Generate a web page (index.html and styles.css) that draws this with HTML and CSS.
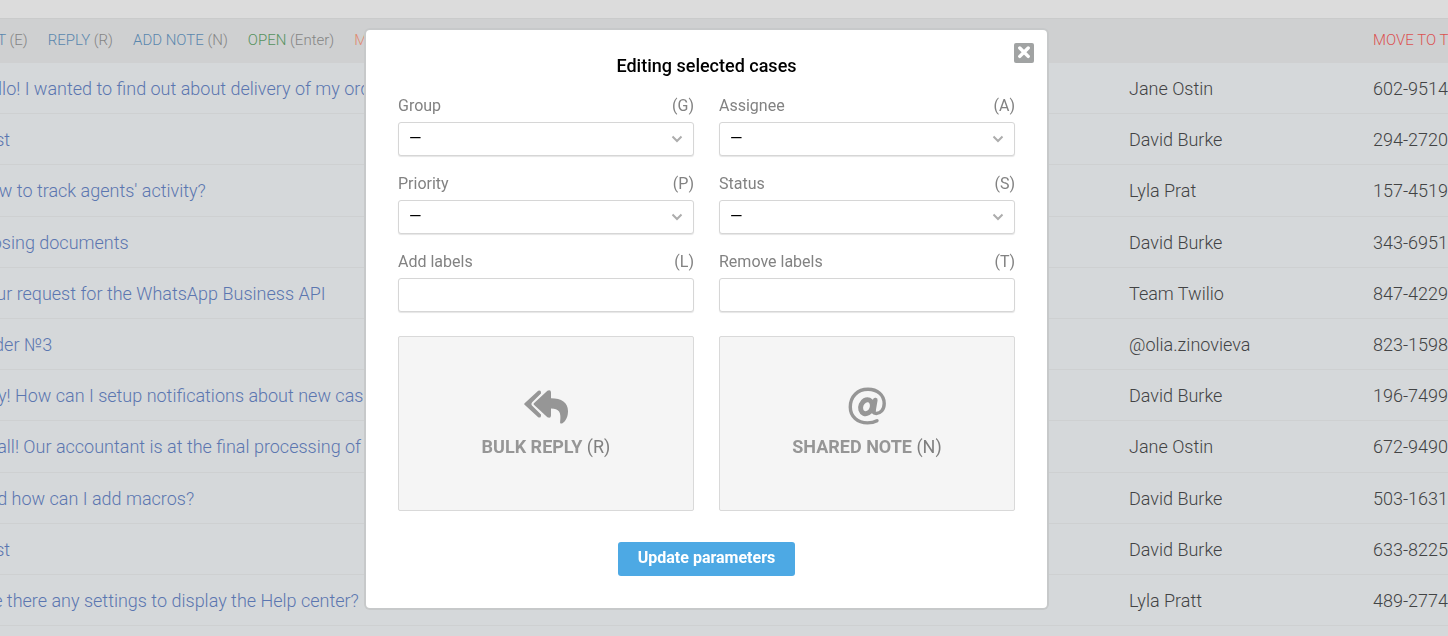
FILE: index.html
```html
<!DOCTYPE html>
<html lang="en">
<head>
<meta charset="utf-8">
<title>Editing selected cases</title>
<link rel="stylesheet" href="styles.css">
</head>
<body>
<main class="page">
  <div class="topbar"></div>
  <nav class="toolbar">
    <button class="action">EDIT <span class="key">(E)</span></button>
    <button class="action">REPLY <span class="key">(R)</span></button>
    <button class="action">ADD NOTE <span class="key">(N)</span></button>
    <button class="action action-open">OPEN <span class="key">(Enter)</span></button>
    <button class="action action-merge">MERGE</button>
    <button class="action action-trash">MOVE TO TRASH</button>
  </nav>
  <table class="cases">
    <colgroup><col class="col-subject"><col class="col-client"><col class="col-assignee"><col class="col-number"></colgroup>
    <tbody>
      <tr><td><a href="#">Hello! I wanted to find out about delivery of my order</a></td><td></td><td>Jane Ostin</td><td>602-951473</td></tr>
      <tr><td><a href="#">Test</a></td><td></td><td>David Burke</td><td>294-272083</td></tr>
      <tr><td><a href="#">How to track agents' activity?</a></td><td></td><td>Lyla Prat</td><td>157-451906</td></tr>
      <tr><td><a href="#">Closing documents</a></td><td></td><td>David Burke</td><td>343-695132</td></tr>
      <tr><td><a href="#">Your request for the WhatsApp Business API</a></td><td></td><td>Team Twilio</td><td>847-422915</td></tr>
      <tr><td><a href="#">Order №3</a></td><td></td><td>@olia.zinovieva</td><td>823-159834</td></tr>
      <tr><td><a href="#">Hey! How can I setup notifications about new cases?</a></td><td></td><td>David Burke</td><td>196-749940</td></tr>
      <tr><td><a href="#">Hi all! Our accountant is at the final processing of the</a></td><td></td><td>Jane Ostin</td><td>672-949027</td></tr>
      <tr><td><a href="#">And how can I add macros?</a></td><td></td><td>David Burke</td><td>503-163118</td></tr>
      <tr><td><a href="#">Test</a></td><td></td><td>David Burke</td><td>633-822554</td></tr>
      <tr><td><a href="#">Are there any settings to display the Help center?</a></td><td>,</td><td>Lyla Pratt</td><td>489-277461</td></tr>
    </tbody>
  </table>
</main>

<div class="overlay">
  <form class="modal" role="dialog" aria-labelledby="modal-title">
    <button class="close" type="button" aria-label="Close">
      <svg viewBox="0 0 20 20" width="20" height="20"><path d="M5.8 5 14.2 13.4M14.2 5 5.8 13.4" stroke="#fff" stroke-width="3.4" stroke-linecap="round"/></svg>
    </button>
    <h1 class="title" id="modal-title">Editing selected cases</h1>
    <div class="fields">
      <div class="field">
        <label class="label" for="group"><span>Group</span><span>(G)</span></label>
        <div class="select-wrap"><select class="control" id="group"><option>—</option></select><svg class="chevron" viewBox="0 0 12 8" width="12" height="8"><path d="M1.5 1.5 6 6 10.5 1.5"/></svg></div>
      </div>
      <div class="field">
        <label class="label" for="assignee"><span>Assignee</span><span>(A)</span></label>
        <div class="select-wrap"><select class="control" id="assignee"><option>—</option></select><svg class="chevron" viewBox="0 0 12 8" width="12" height="8"><path d="M1.5 1.5 6 6 10.5 1.5"/></svg></div>
      </div>
      <div class="field">
        <label class="label" for="priority"><span>Priority</span><span>(P)</span></label>
        <div class="select-wrap"><select class="control" id="priority"><option>—</option></select><svg class="chevron" viewBox="0 0 12 8" width="12" height="8"><path d="M1.5 1.5 6 6 10.5 1.5"/></svg></div>
      </div>
      <div class="field">
        <label class="label" for="status"><span>Status</span><span>(S)</span></label>
        <div class="select-wrap"><select class="control" id="status"><option>—</option></select><svg class="chevron" viewBox="0 0 12 8" width="12" height="8"><path d="M1.5 1.5 6 6 10.5 1.5"/></svg></div>
      </div>
      <div class="field">
        <label class="label" for="add-labels"><span>Add labels</span><span>(L)</span></label>
        <input class="control" id="add-labels" type="text">
      </div>
      <div class="field">
        <label class="label" for="remove-labels"><span>Remove labels</span><span>(T)</span></label>
        <input class="control" id="remove-labels" type="text">
      </div>
    </div>
    <div class="tiles">
      <button class="tile" type="button">
        <svg class="tile-icon" viewBox="0 0 44 40" width="44" height="40">
          <path d="M.6 17.2 14.2 4.7Q17 3.6 17 6.6V7.6L8.2 16.2Q6.6 18 8.2 19.8L17 28.4V29.4Q17 32.4 14.2 31.3L.6 18.8Q-.2 18 .6 17.2Z"/>
          <path d="M9.9 17.2 23.4 4.7Q27 3.4 27 6.6V12.3C37.5 12.3 44 16.5 44 25 44 30.5 42 35 38.5 37.2 37 38 35.9 37.4 36.1 36 37.5 26 35 22.5 27 22.5V29.4Q27 32.6 23.4 31.3L9.9 18.8Q9.1 18 9.9 17.2Z"/>
        </svg>
        <span class="tile-text"><b>BULK REPLY</b> (R)</span>
      </button>
      <button class="tile" type="button">
        <svg class="tile-icon" viewBox="0 0 40 40" width="40" height="40">
          <g fill="none" stroke="#969696" stroke-linecap="round">
            <path d="M30 34.7C27 36.4 24.5 36.9 20.5 36.9 10.5 36.9 3.3 30.5 3.3 21 3.3 10.5 10.5 3.3 21 3.3 30.5 3.3 37.2 9.3 37.2 17.5 37.2 23.8 33.5 27.8 28.5 27.4 26.5 27.2 26.7 26 27 24.5" stroke-width="3.4"/>
            <ellipse cx="19.5" cy="20.7" rx="5.7" ry="7.2" transform="rotate(22 19.5 20.7)" stroke-width="5"/>
            <path d="M28.3 14 26.3 25.5" stroke-width="4.6"/>
          </g>
        </svg>
        <span class="tile-text"><b>SHARED NOTE</b> (N)</span>
      </button>
    </div>
    <button class="submit" type="submit">Update parameters</button>
  </form>
</div>
</body>
</html>
```

FILE: styles.css
```css
* { box-sizing: border-box; }

body {
  margin: 0;
  font-family: Roboto, "Liberation Sans", sans-serif;
  font-size: 18px;
  line-height: 1.4;
  background: #d5d8da;
}

button, input, select { font: inherit; }

button { cursor: pointer; }

/* Case list behind the dialog, scrolled past its first columns */
.page {
  height: 100vh;
  overflow: hidden;
  font-weight: 300;
}

.topbar {
  height: 19px;
  background: #dcdcdc;
  border-bottom: 1px solid #cacbcb;
}

.toolbar {
  display: flex;
  gap: 20px;
  height: 44px;
  margin-left: -25px;
  align-items: center;
  padding-bottom: 2px;
  background: #cfd0d1;
}

.action {
  flex: none;
  padding: 0;
  border: 0;
  background: none;
  color: #5a87ae;
  font-size: 15px;
  white-space: nowrap;
}

.key { color: #858585; }
.action-open { color: #56925f; }
.action-merge { color: #e08a70; }

.action-trash {
  width: 75px;
  margin-left: auto;
  color: #dc5252;
}

.cases {
  width: calc(100% + 24px);
  margin-left: -24px;
  table-layout: fixed;
  border-collapse: separate;
  border-spacing: 0;
}

.col-client { width: 418px; }
.col-assignee { width: 244px; }
.col-number { width: 75px; }

.cases td {
  padding: 13px 0 12px;
  border-bottom: 1px solid #ced0d1;
  color: #424344;
  white-space: nowrap;
  overflow: hidden;
}

.cases a {
  color: #5b76b0;
  text-decoration: none;
}

.overlay {
  position: fixed;
  inset: 0;
  display: flex;
  align-items: flex-start;
  justify-content: center;
  padding: 30px 35px 0 0;
}

.modal {
  position: relative;
  width: 100%;
  max-width: 681px;
  padding: 24px 32px 32px;
  border-radius: 4px;
  background: #fff;
  box-shadow: 0 0 0 2px #c7c9ca;
}

.close {
  position: absolute;
  top: 13px;
  right: 13px;
  display: flex;
  width: 20px;
  height: 20px;
  padding: 0;
  border: 0;
  border-radius: 2px;
  background: #a1a3a3;
}

.title {
  margin: 0 0 16px;
  color: #000;
  font-size: 18px;
  font-weight: 500;
  line-height: 24px;
  text-align: center;
}

.fields, .tiles {
  display: grid;
  grid-template-columns: 1fr 1fr;
  gap: 16px 25px;
}

.label {
  display: flex;
  justify-content: space-between;
  margin-bottom: 4px;
  color: #828282;
  font-size: 16px;
  line-height: 24px;
}

.select-wrap { position: relative; }

.control {
  display: block;
  width: 100%;
  height: 34px;
  padding: 0 10px;
  border: 1px solid #d6d6d6;
  border-radius: 3px;
  background: #fff;
  box-shadow: 0 1px 1px #e6e6e6;
  color: #000;
  font-size: 16px;
  appearance: none;
}

.chevron {
  position: absolute;
  top: 13px;
  right: 11px;
  pointer-events: none;
  fill: none;
  stroke: #adadad;
  stroke-width: 2;
}

.tiles { margin-top: 24px; }

.tile {
  display: flex;
  flex-direction: column;
  align-items: center;
  height: 175px;
  padding: 49px 0 0;
  border: 1px solid #d9d9d9;
  border-radius: 2px;
  background: #f5f5f5;
  color: #808080;
}

.tile-icon {
  margin-bottom: 8px;
  fill: #969696;
}

.tile-text b { color: #969696; }

.submit {
  display: block;
  height: 34px;
  margin: 31px auto 0;
  padding: 0 20px 2px;
  border: 0;
  border-radius: 3px;
  background: #4da9e4;
  color: #fff;
  font-size: 16px;
  font-weight: 700;
}
```
